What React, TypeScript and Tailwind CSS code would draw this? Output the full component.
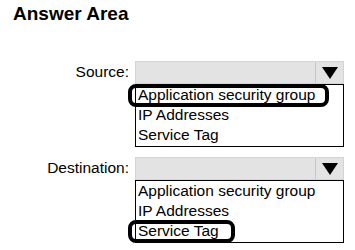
import React from "react";

function Combo({ label, options, highlight, hw }: { label: string; options: string[]; highlight: number; hw: number }) {
  return (
    <div className="flex items-start">
      <div className="w-[135px] pr-[6px] pt-[1px] text-right text-[15.5px] leading-[20px] text-black">{label}</div>
      <div className="flex w-[209px] flex-col">
        <div className="flex h-[23px] border border-[#d4d4d4] bg-[#e3e3e3]">
          <div className="flex-1" />
          <div className="flex w-[28px] items-center justify-center border-l border-[#c8c8c8]">
            <svg width="16" height="14" viewBox="0 0 16 14">
              <polygon points="0,1 16,1 8,13" fill="#000" />
            </svg>
          </div>
        </div>
        <div className="flex flex-col border border-black bg-white pb-[1px] pl-[2px]">
          {options.map((o, i) => (
            <div key={o} className="relative text-[15.5px] leading-[20px] text-black">
              {o}
              {i === highlight && (
                <div
                  className="absolute -left-[10px] -top-[1px] h-[23px] rounded-[8px] border-[4px] border-black"
                  style={{ width: hw }}
                />
              )}
            </div>
          ))}
        </div>
      </div>
    </div>
  );
}

export default function App() {
  return (
    <div className="h-[250px] w-[355px] bg-white" style={{ fontFamily: '"Liberation Sans", Arial, sans-serif' }}>
      <div className="pl-[13px] pt-[2px] text-[19px] font-bold leading-[23px] text-black">Answer Area</div>
      <div className="mt-[36px] flex flex-col gap-[10px]">
        <Combo label="Source:" options={["Application security group", "IP Addresses", "Service Tag"]} highlight={0} hw={201} />
        <Combo label="Destination:" options={["Application security group", "IP Addresses", "Service Tag"]} highlight={2} hw={107} />
      </div>
    </div>
  );
}
